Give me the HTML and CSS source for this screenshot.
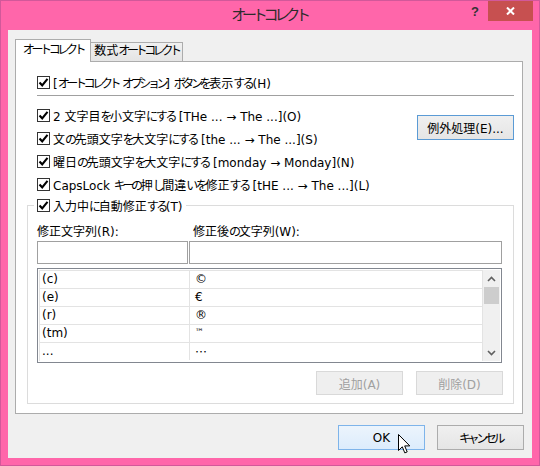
FILE: index.html
```html
<!DOCTYPE html>
<html>
<head>
<meta charset="utf-8">
<title>オートコレクト</title>
<link rel="stylesheet" href="styles.css">
</head>
<body>
<div class="window">
  <div class="titlebar">
    <div class="title"><span class="kk">オートコレクト</span></div>
    <div class="help">?</div>
    <div class="close">
      <svg width="9" height="8" viewBox="0 0 9 8"><path d="M1 0.5 L8 7.5 M8 0.5 L1 7.5" stroke="#fff" stroke-width="2" fill="none"/></svg>
    </div>
  </div>
  <div class="client">
    <div class="tabs">
      <div class="tab active"><span class="kk">オートコレクト</span></div>
      <div class="tab inactive">数式<span class="kk">オートコレクト</span></div>
    </div>
    <div class="panel">
      <div class="cbrow"><span class="cb"><svg width="11" height="11" viewBox="0 0 11 11"><path d="M1.5 5.5 L4.2 8.3 L9.5 1.8" stroke="#000" stroke-width="2.1" fill="none"/></svg></span><span>[<span class="kk">オートコレクト</span> <span class="kk">オプション</span>] <span class="kk">ボタン</span><span class="k">を</span>表示<span class="k">する</span>(H)</span></div>
      <div class="sep"></div>
      <div class="opts">
        <div class="optrows">
          <div class="cbrow"><span class="cb"><svg width="11" height="11" viewBox="0 0 11 11"><path d="M1.5 5.5 L4.2 8.3 L9.5 1.8" stroke="#000" stroke-width="2.1" fill="none"/></svg></span><span>2 文字目<span class="k">を</span>小文字<span class="k">にする</span> [THe ... → The ...](O)</span></div>
          <div class="cbrow"><span class="cb"><svg width="11" height="11" viewBox="0 0 11 11"><path d="M1.5 5.5 L4.2 8.3 L9.5 1.8" stroke="#000" stroke-width="2.1" fill="none"/></svg></span><span>文<span class="k">の</span>先頭文字<span class="k">を</span>大文字<span class="k">にする</span> [the ... → The ...](S)</span></div>
          <div class="cbrow"><span class="cb"><svg width="11" height="11" viewBox="0 0 11 11"><path d="M1.5 5.5 L4.2 8.3 L9.5 1.8" stroke="#000" stroke-width="2.1" fill="none"/></svg></span><span>曜日<span class="k">の</span>先頭文字<span class="k">を</span>大文字<span class="k">にする</span> [monday → Monday](N)</span></div>
          <div class="cbrow"><span class="cb"><svg width="11" height="11" viewBox="0 0 11 11"><path d="M1.5 5.5 L4.2 8.3 L9.5 1.8" stroke="#000" stroke-width="2.1" fill="none"/></svg></span><span>CapsLock <span class="kk">キー</span><span class="k">の</span>押<span class="k">し</span>間違<span class="k">いを</span>修正<span class="k">する</span> [tHE ... → The ...](L)</span></div>
        </div>
        <div class="btn exc">例外処理(E)...</div>
      </div>
      <fieldset class="group">
        <legend class="legend"><span class="cb"><svg width="11" height="11" viewBox="0 0 11 11"><path d="M1.5 5.5 L4.2 8.3 L9.5 1.8" stroke="#000" stroke-width="2.1" fill="none"/></svg></span><span>入力中<span class="k">に</span>自動修正<span class="k">する</span>(T)</span></legend>
        <div class="lbls"><span>修正文字列(R):</span><span class="lbl2">修正後<span class="k">の</span>文字列(W):</span></div>
        <div class="inputs"><div class="input"></div><div class="input"></div></div>
        <div class="list">
          <div class="grid">
            <div class="grow"><span class="c1">(c)</span><span class="c2">©</span></div>
            <div class="grow"><span class="c1">(e)</span><span class="c2">€</span></div>
            <div class="grow"><span class="c1">(r)</span><span class="c2">®</span></div>
            <div class="grow"><span class="c1">(tm)</span><span class="c2 tm">™</span></div>
            <div class="grow"><span class="c1">...</span><span class="c2 cj">…</span></div>
          </div>
          <div class="scroll">
            <div class="arrow"><svg width="9" height="6" viewBox="0 0 9 6"><path d="M1 5 L4.5 1.5 L8 5" stroke="#606060" stroke-width="1.6" fill="none"/></svg></div>
            <div class="thumb"></div>
            <div class="track"></div>
            <div class="arrow"><svg width="9" height="6" viewBox="0 0 9 6"><path d="M1 1 L4.5 4.5 L8 1" stroke="#606060" stroke-width="1.6" fill="none"/></svg></div>
          </div>
        </div>
        <div class="actions">
          <div class="btn disabled">追加(A)</div>
          <div class="btn disabled">削除(D)</div>
        </div>
      </fieldset>
    </div>
    <div class="footer">
      <div class="btn ok">OK</div>
      <div class="btn"><span class="kk">キャンセル</span></div>
    </div>
  </div>
  <svg class="cursor" width="13" height="21" viewBox="0 0 13 21"><path d="M0.5 0.5 L0.5 16.5 L4.3 12.8 L6.8 18.9 L9.2 17.9 L6.7 11.9 L11.8 11.9 Z" fill="#fff" stroke="#000" stroke-width="1" stroke-linejoin="miter"/></svg>
</div>
</body>
</html>
```
FILE: styles.css
```css
* { box-sizing: border-box; }
body {
  margin: 0;
  font-size: 12px;
  color: #000;
}
.window {
  position: relative;
  width: 540px;
  height: 466px;
  background: #ff66aa;
  border: 1px solid #d2589a;
  display: flex;
  flex-direction: column;
  font-family: "DejaVu Sans", "Noto Sans CJK JP", sans-serif;
}
.k { letter-spacing: -0.2em; }
.kk { letter-spacing: -0.28em; }
.cj { font-family: "Noto Sans CJK JP", sans-serif; }
.titlebar {
  height: 29px;
  display: flex;
  align-items: flex-start;
}
.title {
  flex: 1;
  padding-left: 75px;
  text-align: center;
  font-size: 15px;
  line-height: 29px;
  color: #2b2b2b;
  white-space: nowrap;
}
.help {
  width: 26px;
  height: 22px;
  line-height: 22px;
  text-align: center;
  font-family: "Liberation Sans", sans-serif;
  font-weight: bold;
  font-size: 13px;
  color: #333;
}
.close {
  width: 45px;
  height: 20px;
  margin-right: 6px;
  background: #c75050;
  display: flex;
  align-items: center;
  justify-content: center;
}
.client {
  flex: 1;
  margin: 0 7px 7px;
  background: #f0f0f0;
  padding: 9px 8px 0 7px;
  display: flex;
  flex-direction: column;
}
.tabs {
  display: flex;
  height: 22px;
  align-items: flex-end;
  position: relative;
  z-index: 1;
}
.tab {
  text-align: center;
  border: 1px solid #acacac;
  border-bottom: none;
  white-space: nowrap;
}
.tab.active {
  width: 76px;
  height: 23px;
  margin-bottom: -1px;
  background: #fff;
  line-height: 20px;
}
.tab.inactive {
  width: 92px;
  height: 19px;
  border-left: none;
  background: linear-gradient(#f0f0f0, #e5e5e5);
  line-height: 17px;
}
.panel {
  height: 353px;
  margin-right: 1px;
  border: 1px solid #acacac;
  background: #fff;
  padding: 9px 8px 0 11px;
}
.cbrow {
  display: flex;
  align-items: center;
  height: 23px;
  gap: 3px;
  padding-left: 10px;
  white-space: nowrap;
}
.cb {
  width: 13px;
  height: 13px;
  flex: none;
  border: 1px solid #333;
  background: #fff;
  display: flex;
  align-items: center;
  justify-content: center;
}
.cb svg { display: block; }
.sep {
  height: 1px;
  background: #a0a0a0;
  margin: 1px 0 8px 10px;
}
.opts {
  display: flex;
  align-items: flex-start;
}
.optrows { flex: 1; }
.btn {
  width: 87px;
  height: 25px;
  border: 1px solid #acacac;
  background: linear-gradient(#f0f0f0, #e5e5e5);
  display: flex;
  align-items: center;
  justify-content: center;
  white-space: nowrap;
}
.btn.exc {
  width: 97px;
  margin-top: 11px;
  border-color: #5b9bd5;
}
.btn.ok {
  border-color: #7eb4ea;
  background: linear-gradient(#ecf4fc, #dcecfc);
}
.btn.disabled {
  height: 24px;
  border-color: #d9d9d9;
  background: #efefef;
  color: #a0a0a0;
}
.group {
  margin: 0;
  min-width: 0;
  border: 1px solid #dcdcdc;
  padding: 0 10px 8px 9px;
}
.legend {
  display: flex;
  align-items: center;
  gap: 3px;
  height: 19px;
  padding: 0 3px;
  margin-left: -3px;
  white-space: nowrap;
}
.lbls {
  display: grid;
  grid-template-columns: 152px 1fr;
  height: 22px;
  margin-top: 4px;
  align-items: center;
}
.lbl2 { padding-left: 4px; }
.inputs {
  display: grid;
  grid-template-columns: 151px 313px;
  gap: 1px;
}
.input {
  height: 23px;
  border: 1px solid #a0a0a0;
  background: #fff;
}
.list {
  margin-top: 4px;
  width: 465px;
  height: 95px;
  border: 1px solid #828790;
  padding: 1px;
  display: flex;
  overflow: hidden;
}
.grid {
  flex: 1;
  border-left: 1px solid #e3e3e3;
  border-right: 1px solid #e3e3e3;
}
.grow {
  display: grid;
  grid-template-columns: 150px 1fr;
  height: 18px;
  border-top: 1px solid #e3e3e3;
  align-items: center;
}
.c1 {
  padding-left: 2px;
  height: 17px;
  line-height: 17px;
  border-right: 1px solid #e3e3e3;
}
.c2 {
  padding-left: 5px;
  line-height: 17px;
}
.tm { font-size: 9px; line-height: 12px; padding-bottom: 4px; }
.scroll {
  width: 17px;
  background: #f0f0f0;
  display: flex;
  flex-direction: column;
}
.arrow {
  height: 17px;
  display: flex;
  align-items: center;
  justify-content: center;
}
.thumb {
  height: 17px;
  margin: 0 1px;
  background: #cdcdcd;
}
.track { flex: 1; }
.actions {
  margin-top: 8px;
  display: flex;
  justify-content: flex-end;
  gap: 13px;
}
.footer {
  margin-top: 11px;
  display: flex;
  justify-content: flex-end;
  gap: 12px;
}
.cursor {
  position: absolute;
  left: 397px;
  top: 433px;
}
```
